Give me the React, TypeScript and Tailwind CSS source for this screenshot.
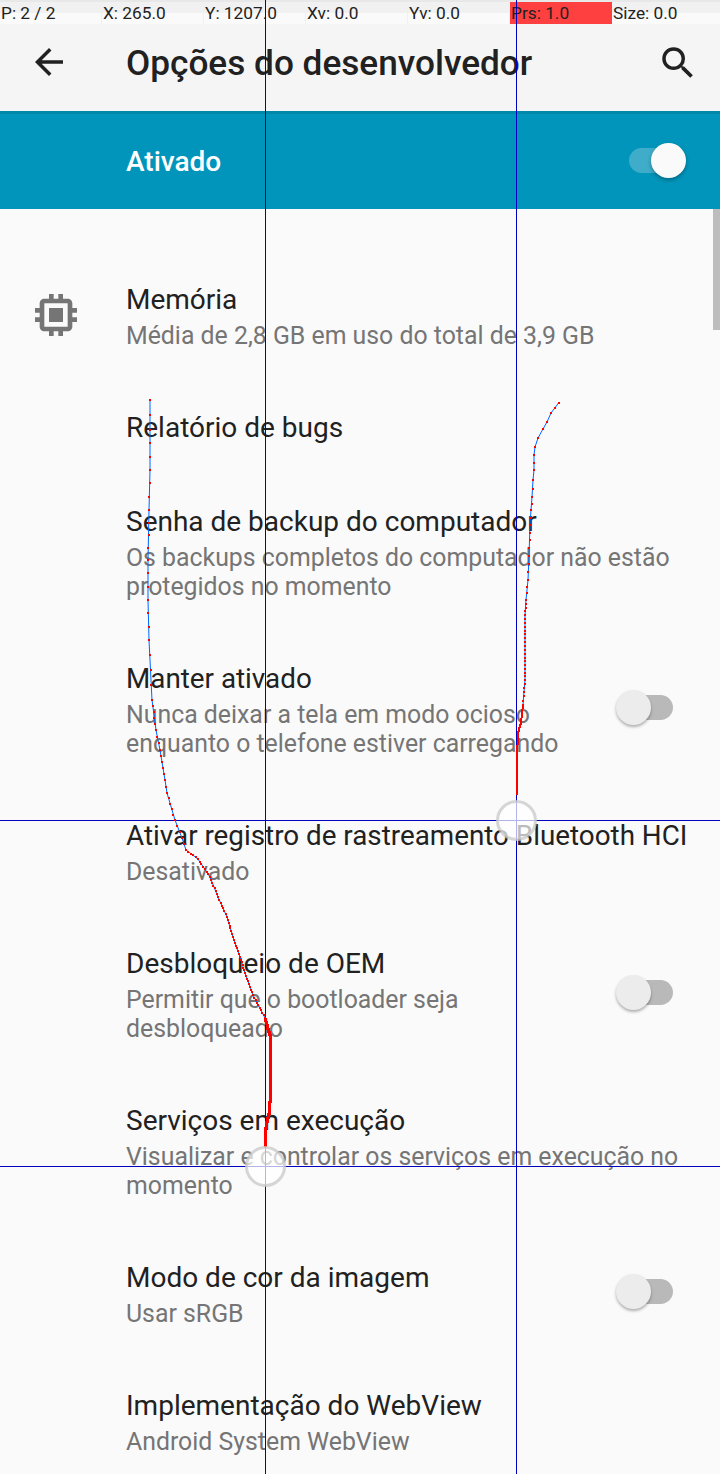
import React from "react";

const right: [number, number][] = [[558.5,403],[551,413],[547,422],[543,429],[538,438],[535,447],[534,455],[534,470],[533,480],[532,497],[531,510],[530,525],[529.5,540],[529,556],[528,580],[526,600],[525,615],[525,650],[525,680],[524,692],[523,705],[521,722],[519,728],[518,735],[517,755],[516.5,795]];
const left: [number, number][] = [[150,400],[150,430],[150,470],[149,510],[148,560],[148,600],[149,640],[152,700],[156,730],[160,750],[165,780],[167,793],[175,820],[182,838],[186,850],[198,859],[210,877],[218,897],[227,917],[233,937],[240,957],[245,973],[253,995],[265,1018],[270.5,1037],[270.5,1095],[269,1113],[266,1127],[265,1147]];

const leftStep = (y: number) => (y < 700 ? 14 : y < 850 ? 6 : y < 1000 ? 3 : 1.5);
const rightStep = (y: number) => (y < 600 ? 8 : y < 700 ? 4 : 1.5);
const leftSize = (y: number) => (y > 1018 ? 3 : 2);
const rightSize = () => 2;

function Trace({ pts, step, size }: { pts: [number, number][]; step: (y: number) => number; size: (y: number) => number }) {
  const d = pts.map((p) => p.join(",")).join(" ");
  const dots: [number, number][] = [];
  for (let i = 0; i < pts.length - 1; i++) {
    const [x1, y1] = pts[i];
    const [x2, y2] = pts[i + 1];
    const n = Math.max(1, Math.round(Math.hypot(x2 - x1, y2 - y1) / step(y1)));
    for (let k = 0; k < n; k++) dots.push([x1 + ((x2 - x1) * k) / n, y1 + ((y2 - y1) * k) / n]);
  }
  return (
    <>
      <polyline points={d} fill="none" stroke="#0066ff" strokeWidth="1" />
      {dots.map(([x, y], i) => {
        const s = size(y);
        return <rect key={i} x={Math.round(x - s / 2)} y={Math.round(y - s / 2)} width={s} height={s} fill="#ff0000" shapeRendering="crispEdges" />;
      })}
    </>
  );
}

function Toggle() {
  return (
    <div className="relative h-[42px] w-[60px] shrink-0">
      <div className="absolute left-[7px] top-[8px] h-[25px] w-[50px] rounded-full bg-[#b9b9b9]" />
      <div className="absolute left-0 top-[3px] h-[35px] w-[35px] rounded-full bg-[#ececec] shadow-[0_2px_3px_rgba(0,0,0,0.3)]" />
    </div>
  );
}

type RowProps = { title: string; lines?: string[]; toggle?: boolean; pb?: string; size?: string };

function Row({ title, lines = [], toggle, pb = "pb-[28px]", size = "text-[28px]" }: RowProps) {
  return (
    <div className={`flex items-center pl-[126px] pr-[44px] pt-[28px] ${pb}`}>
      <div className="min-w-0 flex-1">
        <div className={`whitespace-nowrap leading-[43px] text-[#212121] ${size}`}>{title}</div>
        {lines.map((l) => (
          <div key={l} className="whitespace-nowrap text-[24.85px] leading-[29px] text-[#757575]">{l}</div>
        ))}
      </div>
      {toggle && <Toggle />}
    </div>
  );
}

export default function App() {
  return (
    <div className="relative h-[1474px] w-[720px] overflow-hidden bg-[#fafafa] font-['Roboto',sans-serif]">
      <div className="flex h-[24px] bg-[linear-gradient(#e8e8e8_0,#e8e8e8_2px,#f1f1f1_2px,#f1f1f1_13px,#fafafa_13px)] pt-[2px] text-[17.3px] leading-[22px] text-[#222]">
        {[
          ["P: 2 / 2", "border-r border-[#f0f0f0]"],
          ["X: 265.0", "border-r border-[#f0f0f0]"],
          ["Y: 1207.0", "border-r border-[#f0f0f0]"],
          ["Xv: 0.0", "border-r border-[#f0f0f0]"],
          ["Yv: 0.0", "border-r border-[#f0f0f0]"],
          ["Prs: 1.0", "bg-[#ff4040]"],
          ["Size: 0.0", ""],
        ].map(([t, c]) => (
          <div key={t} className={`h-[22px] w-[102px] whitespace-nowrap pl-[1px] ${c}`}>{t}</div>
        ))}
      </div>

      <header className="flex h-[87px] items-center bg-[#f5f5f5] pb-[10px]">
        <div className="mb-[1px] flex w-[98px] justify-center">
          <svg width="42" height="42" viewBox="0 0 24 24" fill="#212121">
            <path d="M20 11H7.83l5.59-5.59L12 4l-8 8 8 8 1.41-1.41L7.83 13H20v-2z" />
          </svg>
        </div>
        <h1 className="ml-[28px] mt-[2px] flex-1 text-[35.2px] font-medium text-[#212121]">Opções do desenvolvedor</h1>
        <svg className="mr-[21px]" width="42" height="42" viewBox="0 0 24 24" fill="#212121">
          <path d="M15.5 14h-.79l-.28-.27A6.471 6.471 0 0 0 16 9.5 6.5 6.5 0 1 0 9.5 16c1.61 0 3.09-.59 4.23-1.57l.27.28v.79l5 4.99L20.49 19l-4.99-5zm-6 0C7.01 14 5 11.99 5 9.5S7.01 5 9.5 5 14 7.01 14 9.5 11.99 14 9.5 14z" />
        </svg>
      </header>

      <div className="flex h-[98px] items-center justify-between border-t-[3px] border-[#0088ab] bg-[#0295bb] pl-[126px] pr-[32px] pt-[2px]">
        <span className="mb-[2px] text-[28px] font-medium text-white">Ativado</span>
        <div className="relative h-[43px] w-[60px]">
          <div className="absolute left-[1px] top-[7px] h-[25px] w-[50px] rounded-full bg-[#3fadc9]" />
          <div className="absolute right-[2px] top-[2px] h-[35px] w-[35px] rounded-full bg-[#fafafa] shadow-[0_2px_4px_rgba(0,0,0,0.3)]" />
        </div>
      </div>

      <div className="pt-[41px]">
        <div className="relative">
          <svg className="absolute left-[28px] top-[37px]" width="56" height="56" viewBox="0 0 24 24" fill="#757575">
            <path d="M15 9H9v6h6V9z" />
            <path d="M21 11V9h-2V7c0-1.1-.9-2-2-2h-2V3h-2v2h-2V3H9v2H7c-1.1 0-2 .9-2 2v2H3v2h2v2H3v2h2v2c0 1.1.9 2 2 2h2v2h2v-2h2v2h2v-2h2c1.1 0 2-.9 2-2v-2h2v-2h-2v-2h2zm-4 6H7V7h10v10z" />
          </svg>
          <Row title="Memória" lines={["Média de 2,8 GB em uso do total de 3,9 GB"]} />
        </div>
        <Row title="Relatório de bugs" pb="pb-[23px]" />
        <Row title="Senha de backup do computador" lines={["Os backups completos do computador não estão", "protegidos no momento"]} />
        <Row title="Manter ativado" size="text-[27.8px]" lines={["Nunca deixar a tela em modo ocioso", "enquanto o telefone estiver carregando"]} toggle />
        <Row title="Ativar registro de rastreamento Bluetooth HCI" size="text-[27.8px]" lines={["Desativado"]} />
        <Row title="Desbloqueio de OEM" lines={["Permitir que o bootloader seja", "desbloqueado"]} toggle />
        <Row title="Serviços em execução" lines={["Visualizar e controlar os serviços em execução no", "momento"]} />
        <Row title="Modo de cor da imagem" lines={["Usar sRGB"]} toggle />
        <Row title="Implementação do WebView" lines={["Android System WebView"]} />
      </div>

      <div className="absolute right-0 top-[209px] h-[121px] w-[7px] bg-[#bdbdbd]" />

      <svg className="pointer-events-none absolute left-0 top-0" width="720" height="1474">
        <line x1="265.5" y1="0" x2="265.5" y2="1474" stroke="#0000c0" strokeWidth="1" />
        <line x1="516.5" y1="0" x2="516.5" y2="1474" stroke="#0000c0" strokeWidth="1" />
        <line x1="0" y1="820.5" x2="720" y2="820.5" stroke="#0000c0" strokeWidth="1" />
        <line x1="0" y1="1166.5" x2="720" y2="1166.5" stroke="#0000c0" strokeWidth="1" />
        <Trace pts={left} step={leftStep} size={leftSize} />
        <Trace pts={right} step={rightStep} size={rightSize} />
        <circle cx="516.5" cy="820.5" r="19" fill="rgba(255,255,255,0.7)" stroke="rgba(200,200,200,0.75)" strokeWidth="3" />
        <circle cx="265.5" cy="1166.5" r="19" fill="rgba(255,255,255,0.7)" stroke="rgba(200,200,200,0.75)" strokeWidth="3" />
      </svg>
    </div>
  );
}
